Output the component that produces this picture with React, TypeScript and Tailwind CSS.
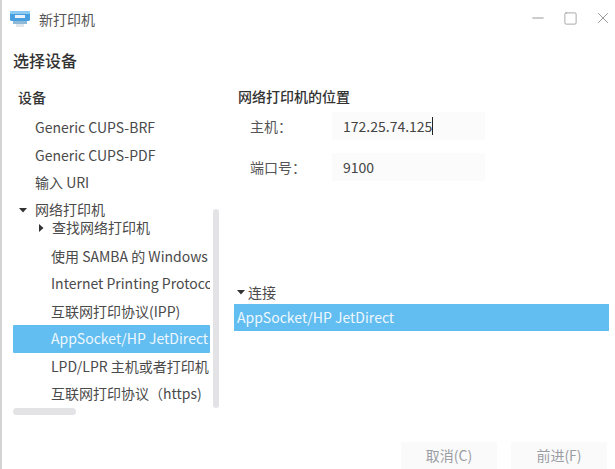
import React from "react";
import { Minus, Square, X } from "lucide-react";

function Caret({ open }: { open: boolean }) {
  return (
    <svg width="8" height="8" viewBox="0 0 8 8" className="shrink-0">
      <path d={open ? "M0 2h8L4 6.5z" : "M2 0v8l4.5-4z"} fill="#333" />
    </svg>
  );
}

function PrinterIcon() {
  return (
    <svg width="20" height="18" viewBox="0 0 20 18" className="shrink-0">
      <rect x="0" y="1" width="20" height="10" rx="1.5" fill="#4a9fe0" />
      <rect x="0" y="1" width="20" height="3" rx="1" fill="#8ccaf2" />
      <rect x="5" y="5" width="10" height="3" fill="#e8f3fb" />
      <rect x="3" y="11" width="14" height="3" fill="#8fb9d8" />
      <rect x="6" y="14" width="8" height="3" fill="#dfe7ec" />
    </svg>
  );
}

function TreeRow({ label, selected, indent }: { label: string; selected?: boolean; indent: string }) {
  return (
    <div
      className={`h-[27.5px] flex items-center whitespace-nowrap overflow-hidden rounded-[1px] ${indent} ${
        selected ? "bg-[#62bdf0] text-[#eef8ff]" : ""
      }`}
    >
      {label}
    </div>
  );
}

function Field({ label, value, cursor }: { label: string; value: string; cursor?: boolean }) {
  return (
    <div className="flex items-center h-[28px]">
      <span className="w-[98px] pl-[16px] text-[#555]">{label}</span>
      <div className="w-[153px] h-[28px] bg-[#fbfbfb] pl-[11px] flex items-center text-[#444]">
        {value}
        {cursor && <span className="w-px h-[18px] bg-[#222]" />}
      </div>
    </div>
  );
}

export default function App() {
  return (
    <div
      className="w-[615px] h-[469px] overflow-hidden bg-white border-l-2 border-[#d4d4d6] flex flex-col text-[14px] text-[#4a4a4a] relative"
      style={{ fontFamily: '"Noto Sans CJK SC", "Noto Sans", sans-serif' }}
    >
      {/* title bar */}
      <div className="h-[40px] flex items-center pl-[8px] pr-[3px] shrink-0">
        <div className="flex items-center mb-[2px]">
          <PrinterIcon />
          <span className="ml-[9px] text-[#555]">新打印机</span>
        </div>
        <div className="ml-auto mb-[4px] flex items-center gap-[16px] text-[#777]">
          <Minus size={18} strokeWidth={1} />
          <Square size={15} strokeWidth={1} />
          <X size={18} strokeWidth={1} />
        </div>
      </div>

      <div className="pl-[11px] h-[40px] flex items-center text-[16px] font-medium text-[#333]">选择设备</div>

      <div className="flex flex-1 min-h-0">
        {/* device tree */}
        <div className="w-[197px] ml-[11px] shrink-0">
          <div className="h-[34px] pl-[5px] flex items-center font-medium text-[#333]">设备</div>
          <TreeRow label="Generic CUPS-BRF" indent="pl-[22px]" />
          <TreeRow label="Generic CUPS-PDF" indent="pl-[22px]" />
          <TreeRow label="输入 URI" indent="pl-[22px]" />
          <div className="h-[22px] mt-[2px] pl-[6px] flex items-center gap-[8px]">
            <Caret open />
            网络打印机
          </div>
          <div className="h-[14px] pl-[24px] flex items-center gap-[7px]">
            <Caret open={false} />
            查找网络打印机
          </div>
          <div className="h-[8px]" />
          <TreeRow label="使用 SAMBA 的 Windows 打印机" indent="pl-[38px]" />
          <TreeRow label="Internet Printing Protocol (ipp)" indent="pl-[38px]" />
          <TreeRow label="互联网打印协议(IPP)" indent="pl-[38px]" />
          <TreeRow label="AppSocket/HP JetDirect" indent="pl-[38px]" selected />
          <TreeRow label="LPD/LPR 主机或者打印机" indent="pl-[38px]" />
          <TreeRow label="互联网打印协议（https)" indent="pl-[38px]" />
          <div className="w-[63px] h-[7px] rounded-full bg-[#e3e3e6]" />
        </div>

        <div className="w-[6px] h-[199px] mt-[129px] ml-[3px] rounded-full bg-[#e3e3e6] shrink-0" />

        {/* location form */}
        <div className="flex-1 pl-[15px] pr-[6px]">
          <div className="h-[32px] pl-[4px] flex items-center font-medium text-[#333]">网络打印机的位置</div>
          <div className="flex flex-col gap-[13px]">
            <Field label="主机：" value="172.25.74.125" cursor />
            <Field label="端口号：" value="9100" />
          </div>
          <div className="h-[100px]" />
          <div className="h-[22px] mb-[1px] pl-[3px] flex items-center gap-[3px]">
            <Caret open />
            连接
          </div>
          <div className="h-[27px] bg-[#62bdf0] text-[#eef8ff] pl-[3px] flex items-center">AppSocket/HP JetDirect</div>
        </div>
      </div>

      {/* footer buttons */}
      <div className="h-[27px] shrink-0 flex justify-end gap-[14px] pr-[8px] mt-auto">
        <div className="w-[96px] bg-[#fafafb] flex items-center justify-center text-[#9a9da3]">取消(C)</div>
        <div className="w-[96px] bg-[#fafafb] flex items-center justify-center text-[#9a9da3]">前进(F)</div>
      </div>
    </div>
  );
}
